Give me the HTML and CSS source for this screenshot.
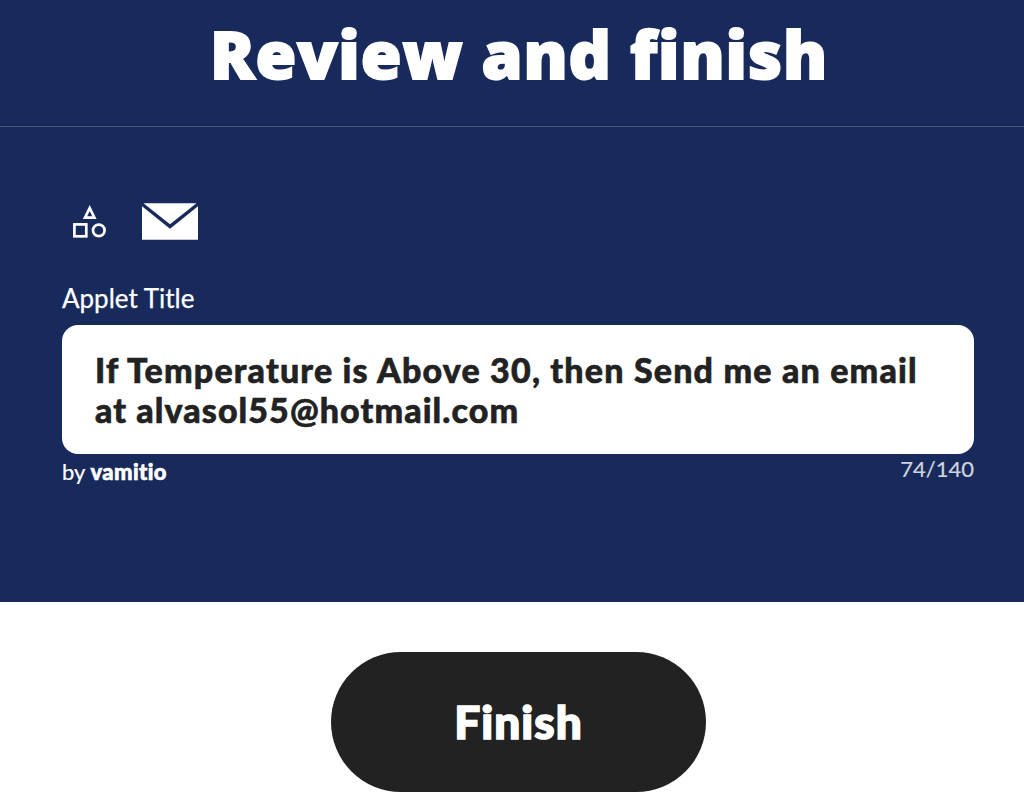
FILE: index.html
```
<!DOCTYPE html>
<html lang="en">
<head>
<meta charset="utf-8">
<title>Review and finish</title>
<link rel="stylesheet" href="styles.css">
</head>
<body>
<main class="review">
  <header class="review-header"><h1 class="title">Review and finish</h1></header>
  <section class="applet">
    <div class="services">
      <svg class="icon-shapes" width="56" height="56" viewBox="0 0 56 56" fill="none" stroke="#fff" stroke-width="2.7">
        <path d="M27.7 15 32.4 24.6H23Z"/>
        <rect x="12.4" y="31.4" width="11.9" height="11.9"/>
        <circle cx="36.8" cy="37.4" r="5.8"/>
      </svg>
      <svg class="icon-mail" width="56" height="56" viewBox="0 0 56 56" fill="#fff">
        <path d="M1.5 10.2H54.5L28 31.2Z"/>
        <path d="M0 13.2 28 35.8 56 13.2V46.8H0Z"/>
      </svg>
    </div>
    <label class="label" for="applet-title"><span class="label-text">Applet Title</span></label>
    <div class="field" id="applet-title"><span class="line-one">If Temperature is Above 30, then Send me an email</span><br><span class="line-two">at alvasol55@hotmail.com</span></div>
    <div class="meta">
      <div class="author">by <strong class="author-name">vamitio</strong></div>
      <div class="counter">74/140</div>
    </div>
  </section>
</main>
<footer class="actions"><button class="finish"><span class="finish-text">Finish</span></button></footer>
</body>
</html>
```
FILE: styles.css
```
* { box-sizing: border-box; }
body { margin: 0; background: #fff; font-family: Lato, "Open Sans", sans-serif; color: #fff; }
.review { height: 602px; background: #182a5b; }
.review-header { height: 127px; padding: 13px 0 0 14px; border-bottom: 1px solid #465479; text-align: center; }
.title { margin: 0; font-family: "Open Sans", sans-serif; font-size: 66px; font-weight: 800; line-height: 80px; letter-spacing: .9px; white-space: nowrap; -webkit-text-stroke: 2px #fff; }
.applet { padding: 66px 50px 0 62px; }
.services { display: flex; gap: 24px; height: 56px; }
.label { display: block; height: 76px; padding-top: 33px; font-size: 26px; line-height: 32px; }
.label-text { -webkit-text-stroke: .25px #fff; }
.field { height: 129px; padding: 25px 33px; border-radius: 16px; background: #fff; color: #222; font-size: 34px; font-weight: 900; line-height: 40px; white-space: nowrap; letter-spacing: 1.17px; -webkit-text-stroke: .6px #222; }
.line-two { letter-spacing: 1.08px; }
.meta { display: flex; justify-content: space-between; padding-top: 1px; font-size: 22px; }
.author { padding-top: 4px; line-height: 26px; -webkit-text-stroke: .2px #fff; }
.author-name { font-weight: 900; letter-spacing: .4px; -webkit-text-stroke: .6px #fff; }
.counter { color: #d1d4de; line-height: 28px; -webkit-text-stroke: .2px #d1d4de; }
.actions { padding: 50px 0 0 331px; }
.finish { display: block; width: 375px; height: 140px; padding: 0; border: 0; border-radius: 70px; background: #222; color: #fff; font: 900 46px/56px Lato, "Open Sans", sans-serif; }
.finish-text { letter-spacing: 1px; -webkit-text-stroke: 1.6px #fff; }
```
